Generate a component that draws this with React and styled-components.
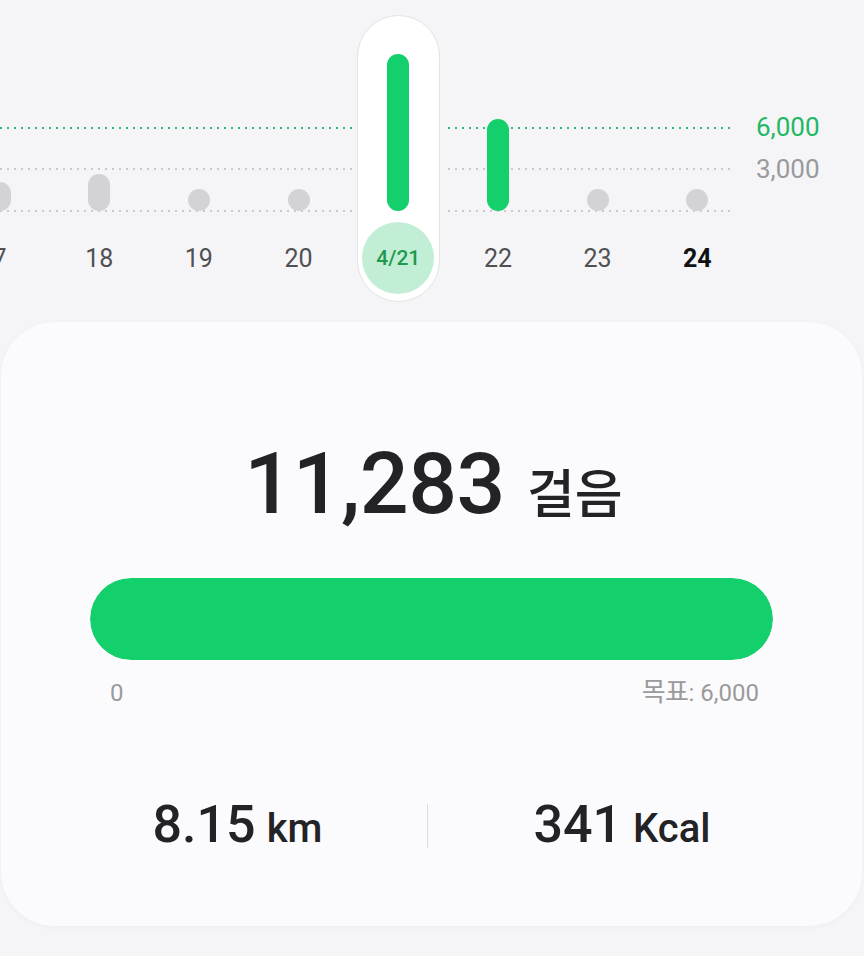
import React from 'react';
import styled, { createGlobalStyle } from 'styled-components';

const GlobalStyle = createGlobalStyle`
  html, body {
    margin: 0;
    padding: 0;
    background: #f5f5f7;
    font-family: Roboto, 'Noto Sans CJK KR', sans-serif;
    overflow: hidden;
  }
`;

const GREEN = '#13cf6c';
const COL_W = 99.7;

const days = [
  { label: '7', value: 29 },
  { label: '18', value: 37 },
  { label: '19', value: 22 },
  { label: '20', value: 22 },
  { label: '4/21', value: 157, selected: true, done: true },
  { label: '22', value: 92, done: true },
  { label: '23', value: 22 },
  { label: '24', value: 22, today: true },
];

const Page = styled.div`
  width: 864px;
  height: 956px;
  padding-top: 15px;
  box-sizing: border-box;
`;

const Chart = styled.div`
  position: relative;
  height: 287px;
`;

const GridLine = styled.div`
  position: absolute;
  left: 0;
  width: 731px;
  top: ${(p) => p.$top}px;
  height: 2px;
  background-image: repeating-linear-gradient(
    to right,
    ${(p) => p.$color} 0 2px,
    transparent 2px 7px
  );
`;

const AxisLabel = styled.div`
  position: absolute;
  left: 756px;
  top: ${(p) => p.$top}px;
  font-size: 26px;
  line-height: 30px;
  color: ${(p) => p.$color};
`;

const Days = styled.div`
  position: relative;
  z-index: 1;
  display: flex;
  height: 100%;
  margin-left: -${COL_W / 2 + 0.5}px;
`;

const Day = styled.div`
  flex: 0 0 ${COL_W}px;
  display: flex;
  justify-content: center;
`;

const Stack = styled.div`
  width: 83px;
  height: 100%;
  box-sizing: border-box;
  display: flex;
  flex-direction: column;
  align-items: center;
  border-radius: 42px;
  ${(p) =>
    p.$selected &&
    `
    background: #ffffff;
    border: 1px solid #e3e3e6;
    box-shadow: 0 0 0 4px #f5f5f7;
  `}
`;

const BarSlot = styled.div`
  height: 196px;
  display: flex;
  align-items: flex-end;
  ${(p) => p.$selected && 'margin-top: -1px;'}
`;

const Bar = styled.div`
  width: 22px;
  border-radius: 11px;
  background: ${(p) => (p.$done ? GREEN : '#d3d3d5')};
`;

const LabelSlot = styled.div`
  margin-top: 11px;
  width: 72px;
  height: 72px;
  border-radius: 50%;
  display: flex;
  align-items: center;
  justify-content: center;
  background: ${(p) => (p.$selected ? '#c2eed6' : 'transparent')};
  font-size: ${(p) => (p.$selected ? '21px' : '25px')};
  font-weight: ${(p) => (p.$selected ? 500 : p.$today ? 700 : 400)};
  color: ${(p) => (p.$selected ? '#1f9a4c' : p.$today ? '#111111' : '#505052')};
`;

const Card = styled.div`
  margin: 20px 2px 0 1px;
  height: 604px;
  box-sizing: border-box;
  padding: 119px 89px 0;
  background: #fbfbfd;
  border-radius: 54px;
  box-shadow: 0 1px 6px rgba(0, 0, 0, 0.035);
  display: flex;
  flex-direction: column;
`;

const Headline = styled.div`
  display: flex;
  align-items: baseline;
  justify-content: center;
  gap: 22px;
  color: #232325;
  margin-left: 4px;
`;

const Count = styled.span`
  font-size: 86px;
  line-height: 86px;
  font-weight: 500;
  letter-spacing: -0.5px;
`;

const Unit = styled.span`
  font-family: 'Noto Sans CJK KR', sans-serif;
  font-size: 52px;
  line-height: 52px;
  font-weight: 500;
`;

const Progress = styled.div`
  margin-top: 51px;
  height: 82px;
  border-radius: 41px;
  background: #eceef0;
  overflow: hidden;
`;

const Fill = styled.div`
  height: 100%;
  border-radius: 41px;
  background: ${GREEN};
`;

const Scale = styled.div`
  margin-top: 17px;
  height: 28px;
  display: flex;
  justify-content: space-between;
  align-items: baseline;
  padding: 0 14px 0 20px;
  font-size: 24px;
  line-height: 28px;
  color: #9a9a9c;
`;

const Goal = styled.span`
  display: flex;
  align-items: baseline;
`;

const GoalWord = styled.span`
  font-family: 'Noto Sans CJK KR', sans-serif;
  font-size: 26px;
  line-height: 1;
  letter-spacing: -0.5px;
`;

const Stats = styled.div`
  margin-top: 94px;
  display: flex;
  justify-content: center;
  align-items: center;
  gap: 105px;
  color: #232325;
`;

const Stat = styled.div`
  display: flex;
  align-items: baseline;
  gap: 11px;
`;

const StatValue = styled.span`
  font-size: 52px;
  line-height: 52px;
  font-weight: 500;
`;

const StatUnit = styled.span`
  font-size: 40px;
  font-weight: 500;
`;

const Divider = styled.div`
  width: 1px;
  height: 44px;
  background: #dcdcde;
`;

export default function App() {
  const steps = 11283;
  const goal = 6000;
  const pct = Math.min(100, (steps / goal) * 100);

  return (
    <>
      <GlobalStyle />
      <Page>
        <Chart>
          <GridLine $top={112} $color="#35b97a" />
          <GridLine $top={153} $color="#c9c9cc" />
          <GridLine $top={195} $color="#c9c9cc" />
          <AxisLabel $top={97} $color="#1fb865">6,000</AxisLabel>
          <AxisLabel $top={139} $color="#9a9a9c">3,000</AxisLabel>
          <Days>
            {days.map((d) => (
              <Day key={d.label}>
                <Stack $selected={d.selected}>
                  <BarSlot $selected={d.selected}>
                    <Bar $done={d.done} style={{ height: d.value }} />
                  </BarSlot>
                  <LabelSlot $selected={d.selected} $today={d.today}>
                    {d.label}
                  </LabelSlot>
                </Stack>
              </Day>
            ))}
          </Days>
        </Chart>
        <Card>
          <Headline>
            <Count>11,283</Count>
            <Unit>걸음</Unit>
          </Headline>
          <Progress>
            <Fill style={{ width: `${pct}%` }} />
          </Progress>
          <Scale>
            <span>0</span>
            <Goal>
              <GoalWord>목표</GoalWord>: 6,000
            </Goal>
          </Scale>
          <Stats>
            <Stat>
              <StatValue>8.15</StatValue>
              <StatUnit>km</StatUnit>
            </Stat>
            <Divider />
            <Stat>
              <StatValue>341</StatValue>
              <StatUnit>Kcal</StatUnit>
            </Stat>
          </Stats>
        </Card>
      </Page>
    </>
  );
}
